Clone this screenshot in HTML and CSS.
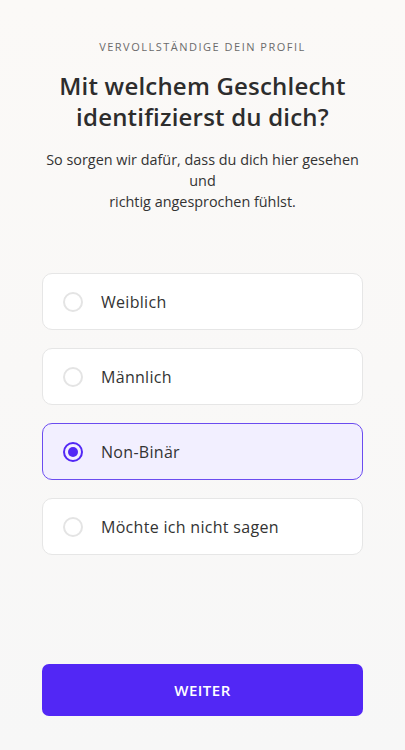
FILE: index.html
```html
<!DOCTYPE html>
<html lang="de">

<head>
  <meta charset="utf-8">
  <title>Profil vervollständigen</title>
  <link rel="stylesheet" href="styles.css">
</head>

<body>
  <div class="screen">
    <header class="intro">
      <p class="eyebrow">VERVOLLSTÄNDIGE DEIN PROFIL</p>
      <h1 class="title">Mit welchem Geschlecht identifizierst du dich?</h1>
      <p class="subtitle">So sorgen wir dafür, dass du dich hier gesehen<br>und<br>richtig angesprochen fühlst.</p>
    </header>

    <div class="options">
      <label class="option">
        <span class="radio"></span>
        <span class="option-text">Weiblich</span>
      </label>
      <label class="option">
        <span class="radio"></span>
        <span class="option-text">Männlich</span>
      </label>
      <label class="option selected">
        <span class="radio"></span>
        <span class="option-text">Non-Binär</span>
      </label>
      <label class="option">
        <span class="radio"></span>
        <span class="option-text">Möchte ich nicht sagen</span>
      </label>
    </div>

    <button class="next" type="button">WEITER</button>
  </div>
</body>

</html>
```

FILE: styles.css
```css
* {
  box-sizing: border-box;
}

html,
body {
  margin: 0;
  height: 100%;
}

body {
  font-family: "Open Sans", "Liberation Sans", sans-serif;
  color: #2b2b2b;
  background: linear-gradient(#fbf9f7, #f7f7f7);
}

.screen {
  min-height: 100%;
  display: flex;
  flex-direction: column;
  padding: 39px 42px 34px;
}

.intro {
  text-align: center;
}

.eyebrow {
  margin: 0;
  font-size: 11px;
  letter-spacing: 1.5px;
  color: #6b6b6b;
}

.title {
  margin: 16px 0 0;
  font-size: 24px;
  line-height: 31px;
  font-weight: 600;
  letter-spacing: 0.2px;
  color: #2d2d2d;
}

.subtitle {
  margin: 17px 0 0;
  font-size: 14.4px;
  line-height: 21px;
  color: #333;
}

.options {
  margin-top: 61px;
  display: flex;
  flex-direction: column;
  gap: 18px;
}

.option {
  display: flex;
  align-items: center;
  gap: 18px;
  height: 57px;
  padding: 0 20px;
  background: #fff;
  border: 1px solid #e6e6e6;
  border-radius: 10px;
  cursor: pointer;
}

.radio {
  width: 20px;
  height: 20px;
  border: 2px solid #e4e4e4;
  border-radius: 50%;
  display: flex;
  align-items: center;
  justify-content: center;
}

.option-text {
  font-size: 16px;
  letter-spacing: 0.3px;
  color: #333;
}

.option.selected {
  background: #f2efff;
  border-color: #6b4cf0;
}

.option.selected .radio {
  border-color: #5227f5;
}

.option.selected .radio::after {
  content: "";
  width: 10px;
  height: 10px;
  border-radius: 50%;
  background: #5227f5;
}

.next {
  margin-top: auto;
  height: 52px;
  width: 100%;
  border: none;
  border-radius: 7px;
  background: #5227f5;
  color: #fff;
  font-family: inherit;
  font-size: 15px;
  font-weight: 600;
  letter-spacing: 0.5px;
  cursor: pointer;
}
```
